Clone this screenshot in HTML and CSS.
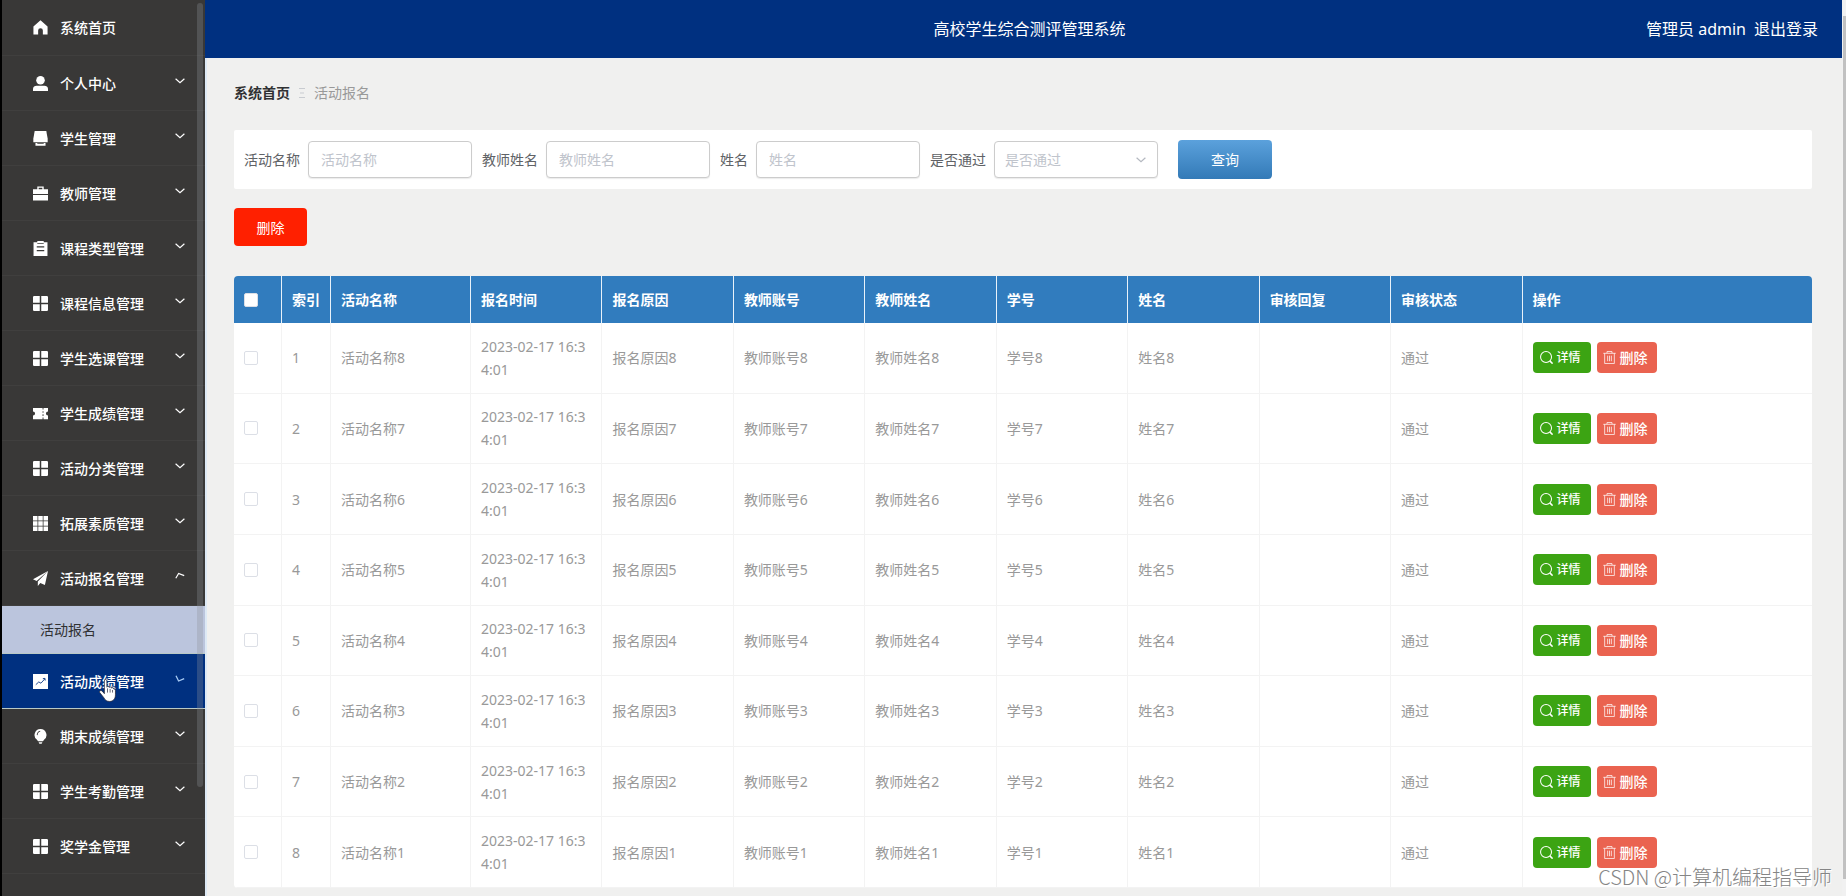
FILE: index.html
```html
<!DOCTYPE html>
<html lang="zh-CN">
<head>
<meta charset="utf-8">
<title>高校学生综合测评管理系统</title>
<link rel="stylesheet" href="styles.css">
</head>
<body>
<svg class="sprite" aria-hidden="true">
  <symbol id="i-home" viewBox="0 0 14 14"><path d="M7 .3 13.6 6v7.6H9.2V9.8a2.2 2.2 0 0 0-4.4 0v3.8H.4V6z"/></symbol>
  <symbol id="i-user" viewBox="0 0 14 14"><circle cx="7" cy="4" r="4"/><path d="M0 14v-2.2C0 9.8 1.6 9 3.4 9h7.2c1.800 0 3.400.8 3.400 2.800V14z"/></symbol>
  <symbol id="i-print" viewBox="0 0 14 14"><path d="M1.600 0h10.800L13.700 7v3.600H.3V7z"/><path d="M2.300 11.200V13.800h9.400V11.200h-1.700v.8H4v-.8z"/></symbol>
  <symbol id="i-case" viewBox="0 0 14 14"><path d="M4 3V.5h6V3h4v4.400H0V3zm1.300 0h3.400V1.700H5.300zM0 8.400h14v5.200H0z" fill-rule="evenodd"/></symbol>
  <symbol id="i-clip" viewBox="0 0 14 14"><path d="M.5 1.200H4V0h6v1.200h3.500V14H.5zM3.500 5v1.100h7V5zm0 3.500v1.100h7V8.500zM4 2v.8h6V2z" fill-rule="evenodd"/></symbol>
  <symbol id="i-grid4" viewBox="0 0 14 14"><path d="M0 .8 .8 0h5.500v6.300H0zM7.700 0h5.500l.8.800v5.500H7.700zM0 7.700h6.300V14H.8L0 13.200zM7.700 7.700H14v5.500l-.8.800H7.700z"/></symbol>
  <symbol id="i-grid9" viewBox="0 0 14 14"><path d="M0 0h4.200v4.200H0zM4.900 0h4.200v4.200H4.900zM9.800 0H14v4.200H9.800zM0 4.900h4.200v4.200H0zM4.900 4.900h4.200v4.200H4.900zM9.800 4.900H14v4.200H9.800zM0 9.800h4.200V14H0zM4.900 9.800h4.200V14H4.900zM9.800 9.800H14V14H9.800z"/></symbol>
  <symbol id="i-ticket" viewBox="0 0 16 14"><path d="M0 1h10.200v1.800h1V1H16v3.800a2.200 2.200 0 0 0 0 4.400V13h-4.800v-1.800h-1V13H0V9.200a2.200 2.200 0 0 0 0-4.400zM10.200 4.500v1.800h1V4.500zm0 3.300v1.800h1V7.800z" fill-rule="evenodd"/></symbol>
  <symbol id="i-send" viewBox="0 0 14 14"><path d="M14 0 0 7.800l3.400 1.500zM14 0 4.500 9.900V14l2.300-2.900 4.300 1.900z"/></symbol>
  <symbol id="i-chart" viewBox="0 0 14 14"><path d="M0 0h14v14H0z"/><path d="m2.600 10 2.800-2.600 2 1.200 3.600-4M9.200 4.300l2-.2.200 2" fill="none" stroke="#003080" stroke-width=".8"/></symbol>
  <symbol id="i-bulb" viewBox="0 0 14 16"><path d="M7 0a6.300 6.300 0 0 1 4 11.200L9.600 13H4.400L3 11.200A6.300 6.300 0 0 1 7 0zM5 14h4l-.8 1.800H5.800zM3 6.500l.9.100C4 4.400 5 3.200 6.800 2.700L6.600 1.900C4.400 2.400 3.200 4 3 6.500z" fill-rule="evenodd"/></symbol>
  <symbol id="i-down" viewBox="0 0 10 10"><path d="m.6 2.800 4.400 4 4.400-4" fill="none" stroke="currentColor" stroke-width="1.200"/></symbol>
  <symbol id="i-up" viewBox="0 0 10 10"><path d="M.8 7.200 3.600 2.400 9.200 4.600" fill="none" stroke="currentColor" stroke-width="1.200"/></symbol>
  <symbol id="i-tilt" viewBox="0 0 10 10"><path d="M1 1.800 3.600 7 9.200 4.600" fill="none" stroke="#a9cdf5" stroke-width="1.300"/></symbol>
  <symbol id="i-search" viewBox="0 0 14 14"><g fill="none" stroke="currentColor"><circle cx="6.500" cy="6.500" r="5.900" stroke-width="1.100"/><path d="m10.600 10.600 3 3" stroke-width="1.700"/></g></symbol>
  <symbol id="i-trash" viewBox="0 0 14 14"><path d="M.3 2.500h13.400M4.300 2.300V.6h5.400v1.700M1.800 2.500v11h10.400V2.500M5 5v6M7 5v6M9 5v6" fill="none" stroke="currentColor" stroke-width=".8"/></symbol>
</svg>
<div class="app">
  <nav class="side" aria-label="主菜单">
    <ul class="menu" id="menu"></ul>
    <span class="side-thumb"></span>
    <svg class="cursor" viewBox="0 0 16 22" aria-hidden="true"><path d="M5 1.800c0-1.700 2.400-1.700 2.400 0v6c.3-1 2.100-.9 2.300.3.600-.8 2-.6 2.200.6.700-.7 2.100-.4 2.100.9 1 0 1.600.6 1.600 1.600v3.900c0 3.900-2.300 6.400-5.500 6.400-2.700 0-4.400-1.100-5.600-3.600L.5 12.800c-.6-1.500 1.200-2.500 2.400-1.200L5 14z" fill="#fff" stroke="#223" stroke-width=".7"/><path d="M8 9v4M10.500 9.500V13M12.800 10.500V13" stroke="#334" stroke-width=".7"/></svg>
  </nav>
  <div class="page">
    <header class="top">
      <h1 class="title">高校学生综合测评管理系统</h1>
      <div class="account"><span>管理员 admin</span><a class="logout" href="#">退出登录</a></div>
    </header>
    <main class="main">
      <nav class="crumbs" aria-label="面包屑"><a class="crumb-home" href="#">系统首页</a><svg class="crumb-sep" viewBox="0 0 8 12" aria-hidden="true"><path d="M1 1.500h6M2 6h4M1 10.500h6"/></svg><span>活动报名</span></nav>
      <form class="filter">
        <label class="label" for="f1">活动名称</label><input class="field" id="f1" type="text" placeholder="活动名称">
        <label class="label" for="f2">教师姓名</label><input class="field" id="f2" type="text" placeholder="教师姓名">
        <label class="label" for="f3">姓名</label><input class="field" id="f3" type="text" placeholder="姓名">
        <label class="label" for="f4">是否通过</label><span class="picker"><select class="field" id="f4"><option>是否通过</option><option>通过</option></select><svg class="picker-arrow" aria-hidden="true"><use href="#i-down"/></svg></span>
        <button class="query" type="button">查询</button>
      </form>
      <button class="remove-all" type="button">删除</button>
      <table class="grid">
        <colgroup><col class="c-check"><col class="c-index"><col class="c-name"><col class="c-data" span="8"><col></colgroup>
        <thead><tr><th><input class="tick" type="checkbox" aria-label="全选"></th><th>索引</th><th>活动名称</th><th>报名时间</th><th>报名原因</th><th>教师账号</th><th>教师姓名</th><th>学号</th><th>姓名</th><th>审核回复</th><th>审核状态</th><th>操作</th></tr></thead>
        <tbody id="rows"></tbody>
      </table>
    </main>
  </div>
  <div class="track"><span class="track-thumb"></span></div>
  <span class="mark">CSDN @计算机编程指导师</span>
</div>
<script src="app.js"></script>
</body>
</html>
```
FILE: app.js
```js
const items = [
  ['home', '系统首页', ''], ['user', '个人中心', 'down'], ['print', '学生管理', 'down'],
  ['case', '教师管理', 'down'], ['clip', '课程类型管理', 'down'], ['grid4', '课程信息管理', 'down'],
  ['grid4', '学生选课管理', 'down'], ['ticket', '学生成绩管理', 'down'], ['grid4', '活动分类管理', 'down'],
  ['grid9', '拓展素质管理', 'down'], ['send', '活动报名管理', 'up', '活动报名'],
  ['chart', '活动成绩管理', 'tilt'], ['bulb', '期末成绩管理', 'down'],
  ['grid4', '学生考勤管理', 'down'], ['grid4', '奖学金管理', 'down']
];
document.getElementById('menu').innerHTML = items.map(([icon, text, arrow, sub]) =>
  `<li><a class="item${arrow === 'tilt' ? ' hover' : ''}" href="#"><svg class="icon" aria-hidden="true"><use href="#i-${icon}"/></svg><span>${text}</span>` +
  (arrow ? `<svg class="arrow" aria-hidden="true"><use href="#i-${arrow}"/></svg>` : '') + '</a>' +
  (sub ? `<a class="sub" href="#">${sub}</a>` : '') + '</li>').join('');

let rows = '';
for (let i = 1; i <= 8; i++) {
  const n = 9 - i;
  rows += `<tr><td><input class="tick" type="checkbox" aria-label="选择第${i}行"></td><td>${i}</td><td>活动名称${n}</td><td>2023-02-17 16:34:01</td><td>报名原因${n}</td><td>教师账号${n}</td><td>教师姓名${n}</td><td>学号${n}</td><td>姓名${n}</td><td></td><td>通过</td>` +
    '<td><div class="actions"><button class="act view" type="button"><svg class="act-icon" aria-hidden="true"><use href="#i-search"/></svg>详情</button>' +
    '<button class="act drop" type="button"><svg class="act-icon" aria-hidden="true"><use href="#i-trash"/></svg>删除</button></div></td></tr>';
}
document.getElementById('rows').innerHTML = rows;
```
FILE: styles.css
```css
* { box-sizing: border-box; }
body { margin: 0; background: #f0f0ef; color: #666; font: 14px/23px "Noto Sans", "Noto Sans CJK SC", sans-serif; }
a { color: inherit; text-decoration: none; }
button, input, select { font: inherit; }
button { border: 0; cursor: pointer; }
.sprite { position: absolute; width: 0; height: 0; }
.app { position: relative; display: flex; height: 100vh; overflow: hidden; border-left: 2px solid #000; }

.side { position: relative; flex: none; width: 203px; overflow: hidden; background: #393837; color: #fff; }
.menu { margin: 0; padding: 0; list-style: none; }
.item { display: flex; align-items: center; gap: 12px; height: 55px; padding: 0 20px 0 31px; border-bottom: 1px solid #403f3e; font-weight: 500; }
.menu > :first-child .item { height: 56px; }
.item.hover { height: 56px; background: #003080; border-top: 1px solid #b9c9c6; border-bottom-color: #b9c9c6; }
.icon { width: 15px; height: 15px; fill: currentColor; }
.arrow { width: 10px; height: 10px; margin: 0 0 4px auto; }
.sub { display: block; height: 47px; padding-left: 38px; background: #bbc5dd; color: #303133; line-height: 47px; }
.side-thumb { position: absolute; top: 3px; right: 2px; width: 6px; height: 784px; border-radius: 3px; background: rgba(144, 147, 153, .3); }
.cursor { position: absolute; left: 97px; top: 679px; width: 17px; height: 23px; }

.page { flex: 1; min-width: 0; }
.top { display: grid; grid-template-columns: 1fr auto 1fr; align-items: center; height: 58px; padding: 0 24px 0 36px; background: #003080; color: #fff; font-size: 16px; }
.title { grid-column: 2; margin: 0; font-size: 16px; font-weight: 400; }
.account { display: flex; justify-content: flex-end; gap: 8px; }
.main { padding: 23px 30px 8px 27px; border-left: 2px solid #dde9f5; }
.crumbs { display: flex; align-items: center; gap: 8px; color: #999; }
.crumb-home { color: #303133; font-weight: 700; }
.crumb-sep { width: 8px; height: 12px; fill: none; stroke: #c8cbd0; }
.filter { display: flex; align-items: center; margin-top: 26px; padding: 10px; border-radius: 2px; background: #fff; }
.label { margin-right: 8px; color: #606266; }
.field { width: 164px; height: 37px; margin: 0 10px 0 0; padding: 0 12px; border: 1px solid #ccc; border-radius: 4px; outline: 0; background: #fff; box-shadow: 0 1px 1px rgba(0, 0, 0, .08); }
.field::placeholder { color: #c0c4cc; opacity: 1; }
.picker { position: relative; margin-right: 10px; }
.picker .field { display: block; padding-left: 10px; appearance: none; color: #c0c4cc; }
.picker-arrow { position: absolute; right: 22px; top: 14px; width: 10px; height: 10px; color: #b4b8c0; }
.query { width: 94px; height: 39px; border-radius: 4px; background: linear-gradient(#5ba1dc, #337ab7); color: #fff; }
.remove-all { display: block; width: 73px; height: 38px; margin-top: 19px; border-radius: 4px; background: #ff2000; color: #fff; }

.grid { width: 100%; height: 612px; margin-top: 30px; border-collapse: separate; border-spacing: 0; table-layout: fixed; border-radius: 4px; overflow: hidden; background: #fff; color: #999; }
.c-check { width: 48px; }
.c-index { width: 49px; }
.c-name { width: 140px; }
.c-data { width: 8.33%; }
.grid th { height: 47px; padding: 0 10px; border-right: 1px solid #e8f2fa; background: #317cbe; color: #fff; font-weight: 700; text-align: left; }
.grid td { height: 70px; padding: 0 10px; border-right: 1px solid #f3f3f3; border-bottom: 1px solid #f3f3f3; word-break: break-all; }
.grid tr > :last-child { border-right: 0; }
.tick { display: block; width: 14px; height: 14px; margin: 0; appearance: none; border: 1px solid #dcdfe6; border-radius: 2px; background: #fff; }
.actions { display: flex; gap: 6px; align-items: center; }
.act { display: flex; align-items: center; gap: 4px; height: 31px; padding: 0 10px 0 7px; border-radius: 4px; color: #fff; font-weight: 500; }
.view { background: #3ca413; font-size: 12px; }
.drop { padding: 0 9px 0 6px; background: #ea6350; font-size: 14px; }
.act-icon { width: 13px; height: 13px; }

.track { flex: none; width: 4px; padding: 16px 0 17px 1px; background: #f1f1f1; }
.track-thumb { display: block; height: 100%; background: #c1c1c1; }
.mark { position: absolute; right: 14px; bottom: 4px; color: #858585; font: 300 20px/30px "Noto Sans CJK SC", sans-serif; text-shadow: 1px 1px 0 #fff; }
```
